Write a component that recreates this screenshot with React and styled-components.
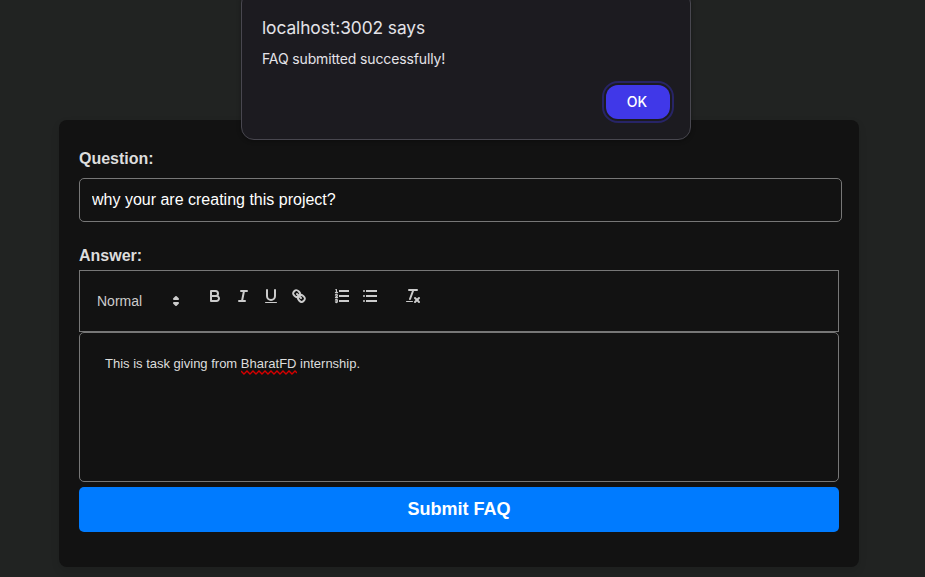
import React from "react";
import styled, { createGlobalStyle } from "styled-components";

const GlobalStyle = createGlobalStyle`
  body {
    margin: 0;
    background: #212322;
    font-family: "Liberation Sans", Arial, sans-serif;
    color: #ddd;
  }
  * { box-sizing: border-box; }
`;

const Page = styled.main`
  height: 577px;
  padding: 120px 66px 0 59px;
  overflow: hidden;
`;

const Card = styled.form`
  display: flex;
  flex-direction: column;
  height: 447px;
  padding: 29px 20px 0;
  border-radius: 8px;
  background: #121212;
  box-shadow: 0 4px 8px rgba(0, 0, 0, 0.1);
`;

const Label = styled.label`
  height: 20px;
  font-size: 16px;
  font-weight: bold;
  line-height: 20px;
`;

const QuestionInput = styled.input`
  flex: none;
  width: 763px;
  height: 44px;
  margin: 9px 0 24px;
  padding: 0 12px;
  border: 1px solid #777;
  border-radius: 5px;
  outline: none;
  background: #121212;
  color: #fff;
  font: 16px "Liberation Sans", Arial, sans-serif;
`;

const Toolbar = styled.div`
  display: flex;
  flex: none;
  gap: 15px;
  height: 62px;
  margin-top: 4px;
  padding: 13px 8px 0;
  border: 1px solid #777;
`;

const HeaderPicker = styled.div`
  display: flex;
  align-items: center;
  justify-content: space-between;
  width: 98px;
  height: 24px;
  margin-top: 5px;
  padding: 0 1px 0 9px;
  color: #ccc;
  font-size: 14px;
`;

const ToolGroup = styled.div`
  display: flex;
`;

const ToolButton = styled.button`
  width: 28px;
  height: 24px;
  padding: 3px 5px;
  border: 0;
  background: none;
`;

const Glyph = styled.svg`
  display: block;
  width: 18px;
  height: 18px;
  fill: none;
  stroke: #ccc;
  stroke-width: 2;
  stroke-linecap: round;
  stroke-linejoin: round;

  .fill { fill: #ccc; }
  .solid { fill: #ccc; stroke: none; }
  .thin { stroke-width: 1.3; }
  .square { stroke-linecap: square; }
`;

const Editor = styled.div`
  flex: none;
  height: 150px;
  padding: 22px 25px;
  border: 1px solid #777;
  border-radius: 5px;
  font-size: 13px;
  line-height: 18px;
`;

const Misspelled = styled.span`
  position: relative;
`;

const Squiggle = styled.svg`
  position: absolute;
  left: 0;
  bottom: -4px;
  width: 56px;
  height: 5px;
  fill: none;
  stroke: #d60000;
  stroke-width: 1.4;
`;

const SubmitButton = styled.button`
  flex: none;
  height: 45px;
  margin-top: 5px;
  padding: 0;
  border: 0;
  border-radius: 5px;
  background: #007bff;
  color: #fff;
  font: bold 18px "Liberation Sans", Arial, sans-serif;
`;

const Dialog = styled.section`
  position: absolute;
  top: -10px;
  left: 241px;
  display: flex;
  flex-direction: column;
  width: 450px;
  height: 150px;
  padding: 25px 20px 20px;
  border: 1px solid #48474f;
  border-radius: 13px;
  background: #1c1b20;
  box-shadow: 0 1px 4px rgba(0, 0, 0, 0.35);
  color: #e4e3e8;
  font-family: Inter, sans-serif;
`;

const DialogTitle = styled.h1`
  margin: 0;
  font-size: 17.33px;
  font-weight: 400;
  letter-spacing: -0.08px;
  line-height: 24px;
`;

const DialogMessage = styled.p`
  margin: 9px 0 0;
  font-size: 14px;
  letter-spacing: -0.14px;
  line-height: 20px;
`;

const DialogButton = styled.button`
  align-self: flex-end;
  width: 64px;
  height: 34px;
  margin-top: 16px;
  padding: 0 2px 1px 0;
  border: 0;
  border-radius: 12px;
  outline: 2px solid #272466;
  outline-offset: 2px;
  background: #4038e8;
  color: #fff;
  font: 500 14px Inter, sans-serif;
`;

const Icon = ({ children }) => <Glyph viewBox="0 0 18 18">{children}</Glyph>;

const Line = ({ from, to, className }) => (
  <line className={className} x1={from[0]} y1={from[1]} x2={to[0]} y2={to[1]} />
);

const tools = [
  [
    ["Bold", <>
      <path d="M5,4H9.5A2.5,2.5,0,0,1,12,6.5v0A2.5,2.5,0,0,1,9.5,9H5V4Z" />
      <path d="M5,9h5.5A2.5,2.5,0,0,1,13,11.5v0A2.5,2.5,0,0,1,10.5,14H5V9Z" />
    </>],
    ["Italic", <>
      <Line from={[7, 4]} to={[13, 4]} />
      <Line from={[5, 14]} to={[11, 14]} />
      <Line from={[8, 14]} to={[10, 4]} />
    </>],
    ["Underline", <>
      <path d="M5,3V9a4.012,4.012,0,0,0,4,4H9a4.012,4.012,0,0,0,4-4V3" />
      <rect className="solid" x="3" y="15" width="12" height="1" rx="0.5" />
    </>],
    ["Link", <>
      <Line from={[7, 7]} to={[11, 11]} />
      <path d="M8.9,4.577a3.476,3.476,0,0,1,.36,4.679A3.476,3.476,0,0,1,4.577,8.9C3.185,7.5,2.035,6.4,4.217,4.217S7.5,3.185,8.9,4.577Z" />
      <path d="M13.423,9.1a3.476,3.476,0,0,0-4.679-.36,3.476,3.476,0,0,0,.36,4.679c1.392,1.392,2.5,2.542,4.679.36S14.815,10.5,13.423,9.1Z" />
    </>],
  ],
  [
    ["Ordered list", <>
      <Line className="square" from={[7, 4]} to={[15, 4]} />
      <Line className="square" from={[7, 9]} to={[15, 9]} />
      <Line className="square" from={[7, 14]} to={[15, 14]} />
      <path className="thin" d="M2.5,5.5h2" />
      <path className="solid" d="M3.5,6A0.5,0.5,0,0,1,3,5.5V3.085l-0.276.138A0.5,0.5,0,0,1,2.053,3c-0.124-.247-0.023-0.324.224-0.447l1-.5A0.5,0.5,0,0,1,4,2.5v3A0.5,0.5,0,0,1,3.5,6Z" />
      <path className="thin" d="M4.5,10.5h-2c0-.234,1.85-1.076,1.85-2.234A0.959,0.959,0,0,0,2.5,8.156" />
      <path className="thin" d="M2.5,14.846a0.959,0.959,0,0,0,1.85-.109A0.7,0.7,0,0,0,3.75,14a0.688,0.688,0,0,0,.6-0.736,0.959,0.959,0,0,0-1.85-.109" />
    </>],
    ["Bullet list", <>
      <Line className="square" from={[6, 4]} to={[15, 4]} />
      <Line className="square" from={[6, 9]} to={[15, 9]} />
      <Line className="square" from={[6, 14]} to={[15, 14]} />
      <Line from={[3, 4]} to={[3, 4]} />
      <Line from={[3, 9]} to={[3, 9]} />
      <Line from={[3, 14]} to={[3, 14]} />
    </>],
  ],
  [
    ["Clear formatting", <>
      <Line from={[5, 3]} to={[13, 3]} />
      <Line from={[6, 12]} to={[9.35, 3]} />
      <Line from={[11, 11]} to={[15, 15]} />
      <Line from={[15, 11]} to={[11, 15]} />
      <rect className="solid" x="2" y="14" width="7" height="1" rx="0.5" />
    </>],
  ],
];

export default function App() {
  return (
    <>
      <GlobalStyle />
      <Page>
        <Card onSubmit={(event) => event.preventDefault()}>
          <Label htmlFor="question">Question:</Label>
          <QuestionInput id="question" defaultValue="why your are creating this project?" />
          <Label>Answer:</Label>
          <Toolbar>
            <HeaderPicker>
              Normal
              <Icon>
                <polygon className="fill" points="7 11 9 13 11 11 7 11" />
                <polygon className="fill" points="7 7 9 5 11 7 7 7" />
              </Icon>
            </HeaderPicker>
            {tools.map((group) => (
              <ToolGroup key={group[0][0]}>
                {group.map(([name, drawing]) => (
                  <ToolButton key={name} type="button" aria-label={name}>
                    <Icon>{drawing}</Icon>
                  </ToolButton>
                ))}
              </ToolGroup>
            ))}
          </Toolbar>
          <Editor>
            This is task giving from{" "}
            <Misspelled>
              BharatFD
              <Squiggle viewBox="0 0 56 5">
                <path d="M0,1L3,4L6,1L9,4L12,1L15,4L18,1L21,4L24,1L27,4L30,1L33,4L36,1L39,4L42,1L45,4L48,1L51,4L54,1L56,3" />
              </Squiggle>
            </Misspelled>{" "}
            internship.
          </Editor>
          <SubmitButton type="submit">Submit FAQ</SubmitButton>
        </Card>
      </Page>
      <Dialog role="alertdialog">
        <DialogTitle>localhost:3002 says</DialogTitle>
        <DialogMessage>FAQ submitted successfully!</DialogMessage>
        <DialogButton type="button">OK</DialogButton>
      </Dialog>
    </>
  );
}
